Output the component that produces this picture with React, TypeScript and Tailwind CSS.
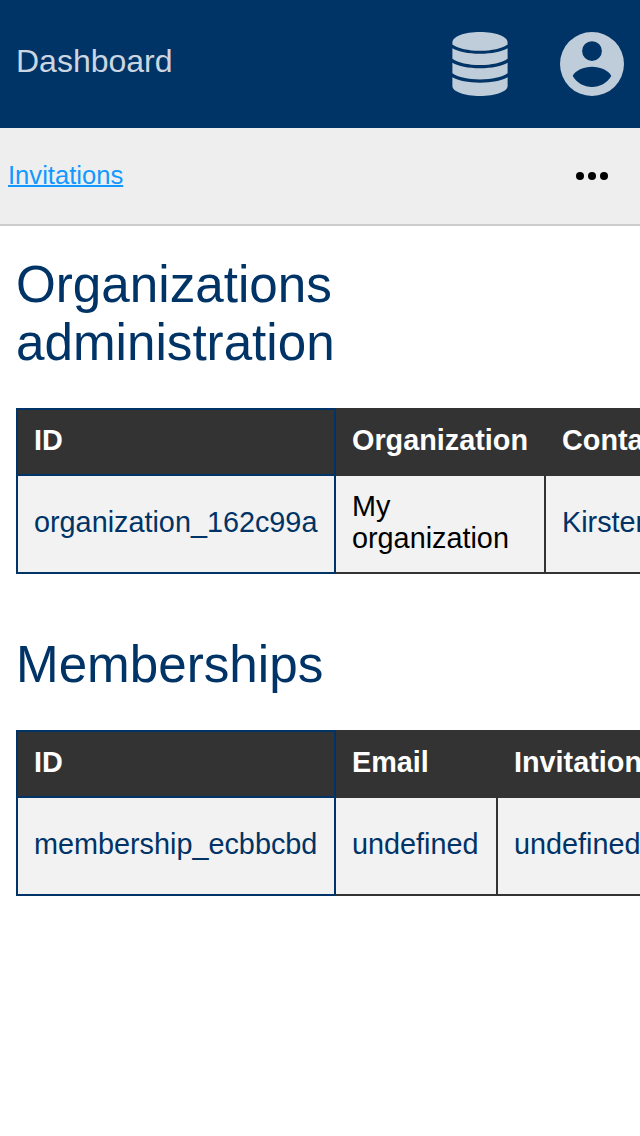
import type { ReactNode } from "react";

function Heading({ children }: { children: ReactNode }) {
  return <h1 className="text-[51.2px] leading-[58px] text-[#003366]">{children}</h1>;
}

function DatabaseIcon() {
  return (
    <svg viewBox="-0.4 0 56.8 64" preserveAspectRatio="none" className="h-16 w-14 fill-[#bfccd9]">
      <path d="M0 10.500C0 4.500 12 0 28 0S56 4.500 56 10.500V12.500C50 16.500 40 18.800 28 18.800S6 16.500 0 12.500Z" />
      <path d="M0 16.200C6 19.500 16 21.700 28 21.700S50 19.500 56 16.200V26.700C50 30.700 40 33 28 33S6 30.700 0 26.700Z" />
      <path d="M0 30.700C6 34 16 36.200 28 36.200S50 34 56 30.700V41.200C50 45.200 40 47.400 28 47.400S6 45.200 0 41.200Z" />
      <path d="M0 45.300C6 48.600 16 50.700 28 50.700S50 48.600 56 45.300V54C56 59.500 44 64 28 64S0 59.500 0 54Z" />
    </svg>
  );
}

function AccountIcon() {
  return (
    <svg viewBox="0 0 64 64" className="ml-[52px] size-16 fill-[#bfccd9]">
      <path
        fillRule="evenodd"
        d="M32 0a32 32 0 1 0 0 64a32 32 0 1 0 0-64ZM32 9.200a9.900 9.900 0 1 1 0 19.800a9.900 9.900 0 1 1 0-19.800ZM32 55C24 55 17 51 12.700 44C15 38.500 24 34.700 32 34.700S49 38.500 51.300 44C47 51 40 55 32 55Z"
      />
    </svg>
  );
}

export default function App() {
  return (
    <div className="h-[1136px] w-[640px] overflow-hidden bg-white font-['Liberation_Sans',sans-serif] text-[28.8px] leading-8">
      <header className="flex h-32 items-center bg-[#003366] px-4">
        <span className="flex-1 pb-1.5 text-[32px] leading-9 text-[#ccd6e0]">Dashboard</span>
        <DatabaseIcon />
        <AccountIcon />
      </header>
      <nav className="flex h-[98px] items-center justify-between border-b-2 border-[#cccccc] bg-[#eeeeee] pr-8 pl-2">
        <a className="pb-0.5 text-[25.6px] text-[#1199ff] underline decoration-2">Invitations</a>
        <div className="flex gap-1">
          <i className="size-2 rounded-full bg-black" />
          <i className="size-2 rounded-full bg-black" />
          <i className="size-2 rounded-full bg-black" />
        </div>
      </nav>
      <main className="pt-[30px] pl-4">
        <Heading>Organizations<br />administration</Heading>
        <table className="mt-9 w-[900px] table-fixed border-collapse text-left">
          <colgroup><col className="w-[318px]" /><col className="w-[210px]" /><col /></colgroup>
          <thead>
            <tr className="h-[66px] bg-[#333333] text-white">
              <th className="border-2 border-[#003366] px-4 pb-1">ID</th>
              <th className="border-y-2 border-[#333333] px-4 pb-1">Organization</th>
              <th className="border-y-2 border-[#333333] pr-4 pb-1 pl-[17px]">Contact</th>
            </tr>
          </thead>
          <tbody>
            <tr className="h-[98px] bg-[#f2f2f2] text-[#003366]">
              <td className="border-2 border-[#003366] px-4 pb-1">organization_162c99a</td>
              <td className="border-2 border-[#333333] px-4 pb-1 text-black">My organization</td>
              <td className="border-2 border-[#333333] px-4 pb-1">Kirsten</td>
            </tr>
          </tbody>
        </table>
        <div className="h-[62px]" />
        <Heading>Memberships</Heading>
        <table className="mt-9 w-[900px] table-fixed border-collapse text-left">
          <colgroup><col className="w-[318px]" /><col className="w-[162px]" /><col /></colgroup>
          <thead>
            <tr className="h-[66px] bg-[#333333] text-white">
              <th className="border-2 border-[#003366] px-4 pb-1">ID</th>
              <th className="border-y-2 border-[#333333] px-4 pb-1">Email</th>
              <th className="border-y-2 border-[#333333] pr-4 pb-1 pl-[17px]">Invitation</th>
            </tr>
          </thead>
          <tbody>
            <tr className="h-[98px] bg-[#f2f2f2] text-[#003366]">
              <td className="border-2 border-[#003366] px-4 pb-1">membership_ecbbcbd</td>
              <td className="border-2 border-[#333333] px-4 pb-1">undefined</td>
              <td className="border-2 border-[#333333] px-4 pb-1">undefined</td>
            </tr>
          </tbody>
        </table>
      </main>
    </div>
  );
}
